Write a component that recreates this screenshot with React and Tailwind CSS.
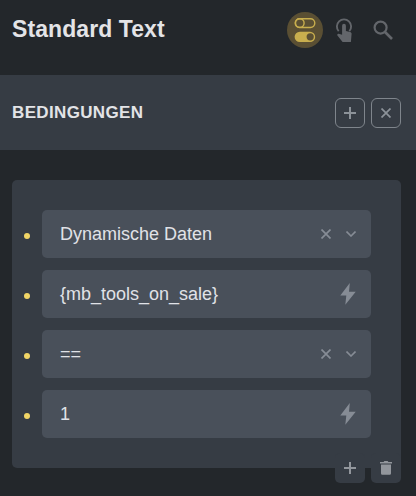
import React from 'react';

const conditions = [
  { id: 'source', value: 'Dynamische Daten', type: 'select' },
  { id: 'tag', value: '{mb_tools_on_sale}', type: 'dynamic' },
  { id: 'compare', value: '==', type: 'select' },
  { id: 'value', value: '1', type: 'dynamic' },
];

function TogglesIcon() {
  return (
    <svg width="36" height="36" viewBox="0 0 36 36" fill="none">
      <rect x="8.2" y="6.7" width="19.6" height="8.8" rx="4.4" stroke="#c8ae4e" strokeWidth="1.4" />
      <circle cx="12.8" cy="11.1" r="4.3" stroke="#c8ae4e" strokeWidth="1.4" />
      <rect x="7.6" y="19.8" width="20.6" height="10.3" rx="5.15" fill="#c8ae4e" />
      <circle cx="23.2" cy="24.8" r="3.6" fill="#5a4f33" />
    </svg>
  );
}

function TapIcon() {
  return (
    <svg width="18" height="26" viewBox="0 0 18 26" fill="none">
      <path d="M3.7 14.2A7.1 7.1 0 1 1 14.3 14.2" stroke="#63666b" strokeWidth="1.9" />
      <path
        d="M7.1 8.7a1.9 1.9 0 0 1 3.8 0v5.3l4.2.9c.9.2 1.5.9 1.5 1.8l-.7 8.3H7.6L2.4 18.4c-.5-.8.5-1.9 1.4-1.6l3.3 1z"
        fill="#63666b"
      />
    </svg>
  );
}

function SearchIcon() {
  return (
    <svg width="20" height="20" viewBox="0 0 20 20" fill="none" stroke="#63666b">
      <circle cx="7.6" cy="7.6" r="6" strokeWidth="2.2" />
      <path d="M12 12l7 7" strokeWidth="2.6" />
    </svg>
  );
}

function PlusIcon() {
  return (
    <svg width="12" height="12" viewBox="0 0 12 12" fill="none" stroke="currentColor" strokeWidth="2">
      <path d="M6 0v12M0 6h12" />
    </svg>
  );
}

function CloseIcon({ size = 10 }) {
  return (
    <svg width={size} height={size} viewBox="0 0 10 10" fill="none" stroke="currentColor" strokeWidth="1.7">
      <path d="M.5.5l9 9M9.5.5l-9 9" />
    </svg>
  );
}

function ChevronIcon() {
  return (
    <svg width="10" height="6" viewBox="0 0 10 6" fill="none" stroke="currentColor" strokeWidth="1.6">
      <path d="M.5.5L5 5L9.5.5" />
    </svg>
  );
}

function BoltIcon() {
  return (
    <svg width="16" height="22" viewBox="0 0 16 22" fill="currentColor">
      <path d="M9.8 0L.3 12.4h6L5.3 21.7L15.7 8.7H9z" />
    </svg>
  );
}

function TrashIcon() {
  return (
    <svg width="12" height="14" viewBox="0 0 12 14" fill="currentColor">
      <path d="M0 .9h3.6L4.4 0h3.2l.8.9H12v1.6H0zM1 3.4h10v8.8c0 1-.7 1.6-1.6 1.6H2.6c-.9 0-1.6-.6-1.6-1.6z" />
    </svg>
  );
}

function ConditionField({ value, type }) {
  return (
    <li className="flex items-center">
      <span className="mt-1 mr-3 ml-3 size-1.5 shrink-0 rounded-full bg-[#f1d566]" />
      <div className="flex h-12 w-[329px] items-center justify-between rounded-[5px] bg-[#49505a] pl-[18px] text-[#868c95]">
        <span className="text-[18px] leading-6 text-[#e0e2e7]">{value}</span>
        {type === 'select' ? (
          <div className="flex items-center gap-[15px] pr-[15px]">
            <CloseIcon />
            <ChevronIcon />
          </div>
        ) : (
          <div className="pr-[15px]">
            <BoltIcon />
          </div>
        )}
      </div>
    </li>
  );
}

export default function App() {
  return (
    <div className="h-[496px] w-[416px] overflow-hidden bg-[#23272b] font-['Liberation_Sans',Arial,sans-serif]">
      <header className="flex h-[75px] items-start justify-between pt-3 pl-3">
        <h1 className="pt-px text-[23px] leading-8 font-bold tracking-[0.08px] text-[#e3e4e7]">Standard Text</h1>
        <div className="flex items-center pr-[23px]">
          <button type="button" className="size-9 rounded-full bg-[#5a4f33]">
            <TogglesIcon />
          </button>
          <button type="button" className="ml-3">
            <TapIcon />
          </button>
          <button type="button" className="ml-5">
            <SearchIcon />
          </button>
        </div>
      </header>

      <section className="flex h-[75px] items-center justify-between bg-[#363c44] pr-[15px] pl-3">
        <h2 className="text-[17px] font-bold tracking-[0.35px] text-[#e3e4e7]">BEDINGUNGEN</h2>
        <div className="flex gap-1.5 text-[#8c9299]">
          <button type="button" className="flex size-[30px] items-center justify-center rounded-md border border-[#7f858c]">
            <PlusIcon />
          </button>
          <button type="button" className="flex size-[30px] items-center justify-center rounded-md border border-[#7f858c]">
            <CloseIcon size={10} />
          </button>
        </div>
      </section>

      <main className="px-3 pt-[30px]">
        <div className="relative h-72 w-[389px] rounded-[5px] bg-[#363c44] pt-[30px]">
          <ul className="flex flex-col gap-3">
            {conditions.map((item) => (
              <ConditionField key={item.id} value={item.value} type={item.type} />
            ))}
          </ul>

          {/* Actions overlap the lower edge of the group */}
          <div className="absolute right-0 -bottom-[15px] flex gap-1.5 text-[#92969c]">
            <button type="button" className="flex size-[30px] items-center justify-center rounded-[5px] bg-[#363c44]">
              <PlusIcon />
            </button>
            <button type="button" className="flex size-[30px] items-center justify-center rounded-[5px] bg-[#363c44]">
              <TrashIcon />
            </button>
          </div>
        </div>
      </main>
    </div>
  );
}
